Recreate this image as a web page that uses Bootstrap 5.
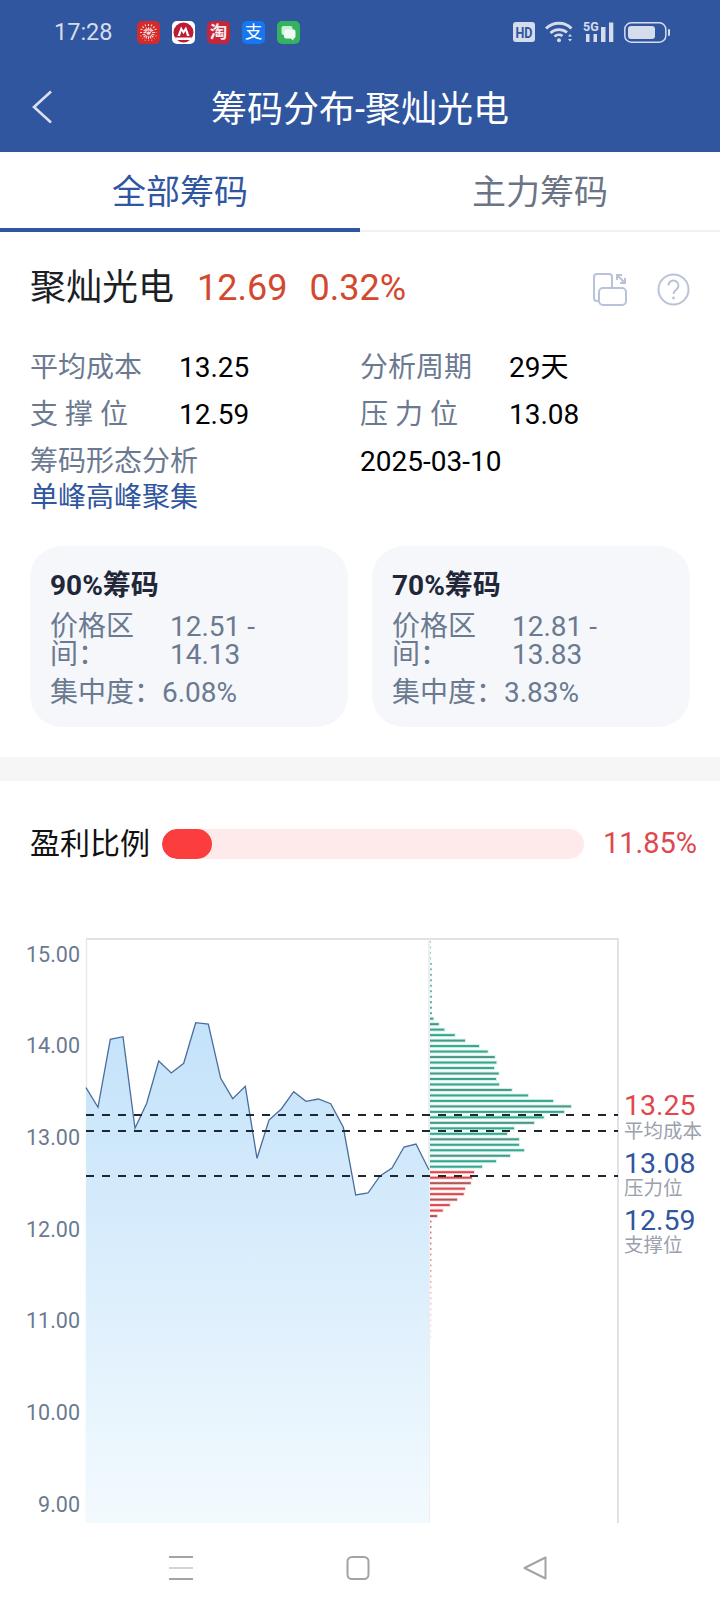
<!DOCTYPE html>
<html lang="zh-CN">
<head>
  <meta charset="UTF-8" />
  <meta name="viewport" content="width=device-width, initial-scale=1">
  <title>筹码分布-聚灿光电</title>
  <link href="https://cdn.jsdelivr.net/npm/bootstrap@5.3.2/dist/css/bootstrap.min.css" rel="stylesheet">
  <style>
    html, body { height: 100%; }
    body { width: 720px; height: 1612px; overflow: hidden; background: #fff; color: #000;
      font-family: Roboto, "Noto Sans CJK SC", sans-serif; font-size: 28px; line-height: 28px; }
    .app-head { height: 152px; background: #30569f; color: #fff; }
    .status-line { height: 64px; color: #d5dcec; font-size: 23.5px; }
    .clock { margin-left: 54px; width: 83px; }
    .tray { gap: 12px; }
    .tray svg, .sys-icons svg, .foot-bar svg, .tool-icons svg { display: block; overflow: visible; }
    .app-glyph { width: 23px; height: 23px; border-radius: 5px; color: #fbeaea; font-size: 17.5px; line-height: 23px; text-align: center; }
    .glyph-tao { background: #c4273c; font-weight: 700; }
    .glyph-pay { background: #1677f0; color: #fff; }
    .sys-icons { margin-left: auto; margin-right: 50px; gap: 10px; }
    .signal-wrap { width: 31px; height: 22px; }
    .signal-text { left: 0; top: 0; font-size: 12.5px; line-height: 11px; font-weight: 700; }
    .title-line { height: 88px; }
    .back-btn { left: 32px; top: 26px; }
    .page-title { font-size: 36px; line-height: 92px; }
    .tab-strip { height: 80px; border-bottom: 2px solid #f0f1f3; }
    .tab-strip .nav-link { height: 80px; padding: 0; font-size: 34px; line-height: 80px; color: #6b7485; border-radius: 0; }
    .tab-strip .nav-link.active { color: #30569f; border-bottom: 4px solid #30569f; }
    .summary { padding: 33px 30px 30px 30px; }
    .stock-line { height: 44px; font-size: 36px; line-height: 46px; color: #1c1f26; }
    .stock-price { color: #d2492f; margin-left: 23px; }
    .stock-pct { color: #d2492f; margin-left: 22px; }
    .tool-icons { gap: 30px; margin-top: 8px; }
    .info-grid { margin-top: 35px; }
    .info-cell { height: 47px; line-height: 47px; }
    .info-lbl { width: 149px; color: #6b7a90; }
    .info-lbl.spread { letter-spacing: 7px; }
    .pattern-lbl { color: #6b7a90; }
    .pattern-val { color: #30569f; line-height: 26px; }
    .range-wrap { gap: 24px; margin-top: 35px; }
    .range-card { width: 318px; height: 181px; background: #f5f7fb; border: 0; border-radius: 32px; padding: 25px 20px 20px; color: #6b7a90; }
    .range-title { font-weight: 700; line-height: 30px; color: #1f2738; margin-bottom: 12px; }
    .range-lbl { flex: 0 0 120px; padding-right: 20px; }
    .range-val { flex: 0 0 130px; }
    .range-conc { margin-top: 10px; }
    .gap-strip { height: 24px; background: #f6f6f7; }
    .profit-line { height: 30px; margin-top: 48px; padding-left: 30px; }
    .profit-lbl { width: 132px; font-size: 30px; color: #111; }
    .profit-track { width: 422px; height: 30px; background: #feeaea; border-radius: 15px; }
    .profit-track .progress-bar { background: #fc3d3d; border-radius: 15px; }
    .profit-val { margin-left: 19px; margin-top: -3px; font-size: 29px; color: #e0474c; }
    .chart-box { display: block; width: 720px; height: 664px; }
    .chart-box text { font-family: Roboto, "Noto Sans CJK SC", sans-serif; }
    .foot-bar { height: 89px; padding: 33px 0 0 169px; gap: 153px; background: #fff; }
  </style>
</head>
<body>
<header class="app-head">
  <div class="status-line d-flex align-items-center">
    <div class="clock">17:28</div>
    <div class="tray d-flex">
      <svg width="23" height="23" viewBox="0 0 23 23">
        <rect width="23" height="23" rx="5" fill="#d42a2a"/>
        <path d="M11.5 3v17M3 11.5h17M5.500 5.500l12 12M17.500 5.500l-12 12M8 3.500l7 16M15 3.500l-7 16M3.500 8l16 7M19.500 8l-16 7" stroke="#f7dcdc" stroke-width="1.100" stroke-dasharray="3 1.400" stroke-dashoffset="1"/>
      </svg>
      <svg width="23" height="23" viewBox="0 0 23 23">
        <rect width="23" height="23" rx="5" fill="#fff"/>
        <circle cx="11.5" cy="11.5" r="10" fill="#bd1c34"/>
        <path d="M3 16.500h17l-1.500 2.500H4.500zM5.500 15L9 5.500l2.500 4 2.500-4 3.500 9.500h-2.500L13.500 10l-2 3.200-2-3.200L8 15z" fill="#fff"/>
      </svg>
      <div class="app-glyph glyph-tao">淘</div>
      <div class="app-glyph glyph-pay">支</div>
      <svg width="23" height="23" viewBox="0 0 23 23">
        <rect width="23" height="23" rx="5" fill="#34b25f"/>
        <rect x="4.500" y="5" width="11" height="9" rx="2" fill="#cfeeda"/>
        <path d="M9 8.500h7.500a2 2 0 0 1 2 2v5a2 2 0 0 1-2 2v2l-3-2H9a2 2 0 0 1-2-2v-5a2 2 0 0 1 2-2z" fill="#eefaf2"/>
      </svg>
    </div>
    <div class="sys-icons d-flex align-items-center">
      <svg width="22" height="20" viewBox="0 0 22 20">
        <rect width="22" height="20" rx="3" fill="#d5dcec"/>
        <text x="11" y="15.500" text-anchor="middle" font-size="14.500" font-weight="700" fill="#30569f" font-family="Roboto" textLength="17" lengthAdjust="spacingAndGlyphs">HD</text>
      </svg>
      <svg width="28" height="22" viewBox="0 0 28 22" fill="none" stroke="#d5dcec" stroke-width="2.800">
        <path d="M1 7.500C8 .5 20 .5 26.500 7.500"/>
        <path d="M5.500 12C10 7.500 17.500 7.500 22 11.500"/>
        <path d="M9.500 15.500C12 13.500 15.500 13.500 17.500 15"/>
        <circle cx="14" cy="19.300" r="2" fill="#d5dcec" stroke="none"/>
        <path d="M23 15.500l2-2.500 2 2.500zM23 18l2 2.500 2-2.500z" fill="#d5dcec" stroke="none"/>
      </svg>
      <div class="signal-wrap position-relative">
        <span class="signal-text position-absolute">5G</span>
        <svg width="31" height="22" viewBox="0 0 31 22">
          <path d="M3 13h3.500v8H3zM10.500 13h3.500v8h-3.500zM18 6h4.500v15H18zM26 1.500h4.300V21H26z" fill="#d5dcec"/>
        </svg>
      </div>
      <svg width="46" height="21" viewBox="0 0 46 21">
        <rect x=".8" y=".8" width="41" height="19.400" rx="6.500" fill="none" stroke="#d5dcec" stroke-width="1.500"/>
        <rect x="4" y="4" width="27" height="13" rx="3" fill="#d5dcec"/>
        <rect x="44" y="7" width="2" height="7" rx="1" fill="#d5dcec"/>
      </svg>
    </div>
  </div>
  <div class="title-line position-relative text-center">
    <svg class="back-btn position-absolute" width="20" height="34" viewBox="0 0 20 34" fill="none" stroke="#dbe2ef" stroke-width="2.600">
      <path d="M19 1.500L2 17l17 15.500"/>
    </svg>
    <div class="page-title">筹码分布-聚灿光电</div>
  </div>
</header>

<ul class="nav nav-fill tab-strip">
  <li class="nav-item"><a class="nav-link active" href="#">全部筹码</a></li>
  <li class="nav-item"><a class="nav-link" href="#">主力筹码</a></li>
</ul>

<section class="summary">
  <div class="stock-line d-flex">
    <span>聚灿光电</span>
    <span class="stock-price">12.69</span>
    <span class="stock-pct">0.32%</span>
    <div class="tool-icons d-flex ms-auto">
      <svg width="34" height="33" viewBox="0 0 34 33" fill="none" stroke="#b8c3d8" stroke-width="2">
        <path d="M5 28H4a3 3 0 0 1-3-3V4a3 3 0 0 1 3-3h12a3 3 0 0 1 3 3v10"/>
        <rect x="6" y="15" width="27" height="17" rx="4"/>
        <path d="M24 2l8 8M24 7V2h5M32 5v5h-5"/>
      </svg>
      <svg width="33" height="33" viewBox="0 0 33 33" fill="none" stroke="#b8c3d8" stroke-width="2">
        <circle cx="16.500" cy="16.500" r="15"/>
        <path d="M11.500 12.500a5 5 0 1 1 7.800 4.100c-1.800 1.200-2.800 2.300-2.800 4.400"/>
        <circle cx="16.500" cy="25" r="1.400" fill="#b8c3d8" stroke="none"/>
      </svg>
    </div>
  </div>

  <div class="row g-0 info-grid">
    <div class="col-6 info-cell d-flex"><span class="info-lbl">平均成本</span><span>13.25</span></div>
    <div class="col-6 info-cell d-flex"><span class="info-lbl">分析周期</span><span>29天</span></div>
    <div class="col-6 info-cell d-flex"><span class="info-lbl spread">支撑位</span><span>12.59</span></div>
    <div class="col-6 info-cell d-flex"><span class="info-lbl spread">压力位</span><span>13.08</span></div>
    <div class="col-6">
      <div class="info-cell pattern-lbl">筹码形态分析</div>
      <div class="pattern-val">单峰高峰聚集</div>
    </div>
    <div class="col-6 info-cell">2025-03-10</div>
  </div>

  <div class="range-wrap d-flex">
    <div class="card range-card">
      <div class="range-title">90%筹码</div>
      <div class="d-flex"><div class="range-lbl">价格区间：</div><div class="range-val">12.51 - 14.13</div></div>
      <div class="range-conc">集中度：6.08%</div>
    </div>
    <div class="card range-card">
      <div class="range-title">70%筹码</div>
      <div class="d-flex"><div class="range-lbl">价格区间：</div><div class="range-val">12.81 - 13.83</div></div>
      <div class="range-conc">集中度：3.83%</div>
    </div>
  </div>
</section>

<div class="gap-strip"></div>

<div class="profit-line d-flex align-items-center">
  <div class="profit-lbl">盈利比例</div>
  <div class="progress profit-track">
    <div class="progress-bar" style="width: 11.85%"></div>
  </div>
  <div class="profit-val">11.85%</div>
</div>

<svg id="chart" class="chart-box" viewBox="0 859 720 664"></svg>

<footer class="foot-bar d-flex">
  <svg width="24" height="24" viewBox="0 0 24 24">
    <path d="M0 1h24" stroke="#a3a3a3" stroke-width="2"/>
    <path d="M0 12h24" stroke="#c4c4c4" stroke-width="1.500"/>
    <path d="M0 23h24" stroke="#a3a3a3" stroke-width="2"/>
  </svg>
  <svg width="24" height="24" viewBox="0 0 24 24" fill="none" stroke="#a3a3a3" stroke-width="2">
    <rect x="1.500" y="1" width="21" height="22" rx="4.500"/>
  </svg>
  <svg width="24" height="24" viewBox="0 0 24 24" fill="none" stroke="#a3a3a3" stroke-width="2" stroke-linejoin="round">
    <path d="M22.500 1.500v21L1.500 12z"/>
  </svg>
</footer>

<script>
  // chart drawn in page coordinates, viewBox starts at the top of the svg
  const xs = [86, 98, 110.3, 123, 135, 146.7, 158.7, 171.3, 183.7, 195.7, 208.3, 220.7, 232.7, 245.3, 257, 269, 281.3, 293.7, 306, 318.3, 330.7, 343.3, 355.7, 368, 380, 392, 404, 416, 429];
  const ys = [1087.7, 1107.3, 1039.3, 1036.7, 1128.3, 1103.3, 1061, 1073, 1063.3, 1022.7, 1024, 1078.3, 1098.7, 1086.3, 1158.3, 1120, 1109, 1091.7, 1101.3, 1099, 1103.7, 1127.3, 1195, 1193, 1176, 1168, 1147, 1144, 1170];
  const line = xs.map((x, i) => x + "," + ys[i]).join(" ");

  const green = [3.3, 8.7, 14.3, 24.7, 35, 49, 57.7, 64.7, 66.3, 64, 68.7, 66, 69, 81.7, 98, 123, 141, 134, 113.7, 104, 84, 77, 89, 89, 94, 80, 66, 52];
  const red = [44, 42, 40.7, 35, 33.7, 27, 19.7, 12.7, 7];

  let bars = "";
  const barY = i => 920 + (65.7 + i * 16.45) / 3;
  for (let i = 0; i < 14; i++) {
    bars += `<rect x="430" y="${barY(i) - 1}" width="${i < 4 ? 1 : 2}" height="2" fill="#3aa58f" opacity="${0.5 + i * 0.03}"/>`;
  }
  green.forEach((w, i) => {
    const y = barY(i + 14);
    const dark = i % 3 === 1 ? "#4c9588" : "#3aa58f";
    bars += `<rect x="430" y="${y - 2}" width="${w + 1}" height="4" fill="#d3f3ea"/><rect x="430" y="${y - 1}" width="${w}" height="2" fill="${dark}"/>`;
  });
  red.forEach((w, i) => {
    const y = barY(i + 42);
    const dark = i % 3 === 2 ? "#b0565c" : "#e0454b";
    bars += `<rect x="430" y="${y - 2}" width="${w + 1}" height="4" fill="#fae0e0"/><rect x="430" y="${y - 1}" width="${w}" height="2" fill="${dark}"/>`;
  });
  for (let i = 51; i < 73; i++) {
    bars += `<rect x="430" y="${barY(i) - 1}" width="1.500" height="2" fill="#e0454b" opacity="${Math.max(0.12, 0.8 - (i - 51) * 0.035)}"/>`;
  }

  let axis = "";
  ["15.00", "14.00", "13.00", "12.00", "11.00", "10.00", "9.00"].forEach((t, i) => {
    axis += `<text x="80" y="${961.5 + i * 91.7}" text-anchor="end" font-size="21.500" fill="#6b7a90">${t}</text>`;
  });

  const dashes = [1115, 1131, 1176].map(y =>
    `<path d="M86 ${y}H618" stroke="#1f2733" stroke-width="2" stroke-dasharray="8 8"/>`).join("");

  const tag = (y, t, c, size) => `<text x="624" y="${y}" font-size="${size}" fill="${c}">${t}</text>`;

  document.getElementById("chart").innerHTML = `
    <defs>
      <linearGradient id="areaFill" gradientUnits="userSpaceOnUse" x1="0" y1="1020" x2="0" y2="1523">
        <stop offset="0" stop-color="#c3e2fa"/>
        <stop offset="1" stop-color="#f3fafe"/>
      </linearGradient>
    </defs>
    <path d="M86 939H618V1523" fill="none" stroke="#e1e2e8" stroke-width="2"/>
    <path d="M86.500 939V1523" stroke="#e8e9ee" stroke-width="1.500"/>
    <path d="M429 939V1523" stroke="#e8e9ee" stroke-width="1.500"/>
    <polygon points="86,1523 ${line} 429,1523" fill="url(#areaFill)"/>
    <polyline points="${line}" fill="none" stroke="#4a6d9c" stroke-width="1.300"/>
    ${bars}
    ${dashes}
    ${axis}
    ${tag(1115, "13.25", "#e0474c", 28.5)}
    ${tag(1138, "平均成本", "#9aa1ad", 19.5)}
    ${tag(1173, "13.08", "#30569f", 28.5)}
    ${tag(1195, "压力位", "#9aa1ad", 19.5)}
    ${tag(1230, "12.59", "#30569f", 28.5)}
    ${tag(1252, "支撑位", "#9aa1ad", 19.5)}
  `;
</script>
<script src="https://cdn.jsdelivr.net/npm/bootstrap@5.3.2/dist/js/bootstrap.bundle.min.js"></script>
</body>
</html>
